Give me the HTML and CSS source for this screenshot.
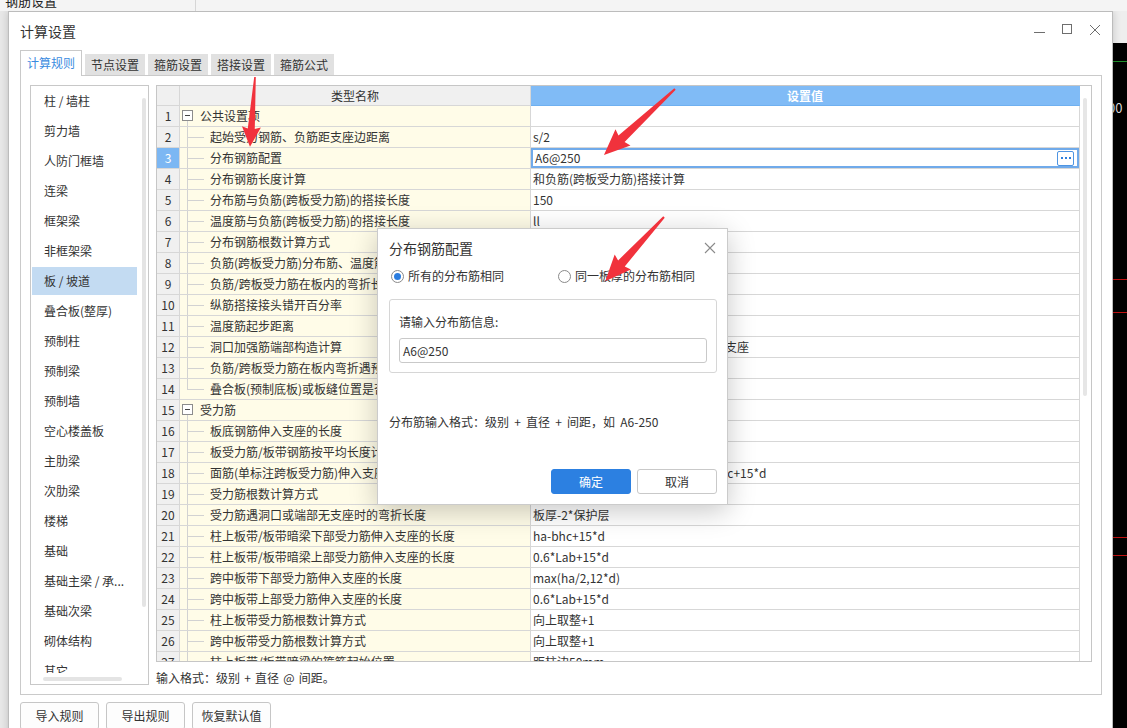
FILE: index.html
```html
<!DOCTYPE html>
<html lang="zh-CN">
<head>
<meta charset="utf-8">
<title>计算设置</title>
<link rel="stylesheet" href="styles.css">
</head>
<body>
<div class="topstrip"><span class="toptitle">钢筋设置</span></div>
<div class="desk">
  <div class="leftgutter"></div>
  <div class="window">
    <div class="titlebar">
      <span class="wtitle">计算设置</span>
      <div class="wctrls">
        <svg class="wc" viewBox="0 0 16 16"><path d="M3 9.5H14" /></svg>
        <svg class="wc" viewBox="0 0 16 16"><rect x="3.5" y="1.5" width="9" height="9" /></svg>
        <svg class="wc" viewBox="0 0 16 16"><path d="M3 2L13 12M13 2L3 12" /></svg>
      </div>
    </div>
    <div class="tabs">
      <div class="tab active">计算规则</div>
      <div class="tab">节点设置</div>
      <div class="tab">箍筋设置</div>
      <div class="tab">搭接设置</div>
      <div class="tab">箍筋公式</div>
    </div>
    <div class="panel">
      <div class="catlist">
        <div class="cat-main">
          <div class="cat-items">
            <div class="cat">柱 / 墙柱</div>
            <div class="cat">剪力墙</div>
            <div class="cat">人防门框墙</div>
            <div class="cat">连梁</div>
            <div class="cat">框架梁</div>
            <div class="cat">非框架梁</div>
            <div class="cat selected">板 / 坡道</div>
            <div class="cat">叠合板(整厚)</div>
            <div class="cat">预制柱</div>
            <div class="cat">预制梁</div>
            <div class="cat">预制墙</div>
            <div class="cat">空心楼盖板</div>
            <div class="cat">主肋梁</div>
            <div class="cat">次肋梁</div>
            <div class="cat">楼梯</div>
            <div class="cat">基础</div>
            <div class="cat">基础主梁 / 承...</div>
            <div class="cat">基础次梁</div>
            <div class="cat">砌体结构</div>
            <div class="cat">其它</div>
          </div>
          <div class="cat-vtrack"><div class="cat-vthumb"></div></div>
        </div>
        <div class="cat-htrack"><div class="cat-hthumb"></div></div>
      </div>
      <div class="rightcol">
        <div class="table">
          <div class="tgrid">
            <div class="row head"><div class="c-num"></div><div class="h-name">类型名称</div><div class="h-val">设置值</div></div>
            <div class="row"><div class="c-num">1</div><div class="c-name grp"><i class="tog"></i>公共设置项</div><div class="c-val"></div></div>
            <div class="row"><div class="c-num">2</div><div class="c-name child">起始受力钢筋、负筋距支座边距离</div><div class="c-val">s/2</div></div>
            <div class="row sel"><div class="c-num">3</div><div class="c-name child">分布钢筋配置</div><div class="c-val"><span>A6@250</span><span class="more"><b></b><b></b><b></b></span></div></div>
            <div class="row"><div class="c-num">4</div><div class="c-name child">分布钢筋长度计算</div><div class="c-val">和负筋(跨板受力筋)搭接计算</div></div>
            <div class="row"><div class="c-num">5</div><div class="c-name child">分布筋与负筋(跨板受力筋)的搭接长度</div><div class="c-val">150</div></div>
            <div class="row"><div class="c-num">6</div><div class="c-name child">温度筋与负筋(跨板受力筋)的搭接长度</div><div class="c-val">ll</div></div>
            <div class="row"><div class="c-num">7</div><div class="c-name child">分布钢筋根数计算方式</div><div class="c-val">向下取整+1</div></div>
            <div class="row"><div class="c-num">8</div><div class="c-name child">负筋(跨板受力筋)分布筋、温度筋是否带弯勾</div><div class="c-val">否</div></div>
            <div class="row"><div class="c-num">9</div><div class="c-name child">负筋/跨板受力筋在板内的弯折长度</div><div class="c-val">板厚-2*保护层</div></div>
            <div class="row"><div class="c-num">10</div><div class="c-name child">纵筋搭接接头错开百分率</div><div class="c-val">50%</div></div>
            <div class="row"><div class="c-num">11</div><div class="c-name child">温度筋起步距离</div><div class="c-val">s</div></div>
            <div class="row"><div class="c-num">12</div><div class="c-name child">洞口加强筋端部构造计算</div><div class="c-val">遇洞口时弯折至板底，无洞口时伸入支座</div></div>
            <div class="row"><div class="c-num">13</div><div class="c-name child">负筋/跨板受力筋在板内弯折遇预制板时的弯折长度</div><div class="c-val">到叠合板顶</div></div>
            <div class="row"><div class="c-num">14</div><div class="c-name child last">叠合板(预制底板)或板缝位置是否布置负筋</div><div class="c-val">是</div></div>
            <div class="row"><div class="c-num">15</div><div class="c-name grp"><i class="tog"></i>受力筋</div><div class="c-val"></div></div>
            <div class="row"><div class="c-num">16</div><div class="c-name child">板底钢筋伸入支座的长度</div><div class="c-val">max(ha/2,5*d)</div></div>
            <div class="row"><div class="c-num">17</div><div class="c-name child">板受力筋/板带钢筋按平均长度计算</div><div class="c-val">否</div></div>
            <div class="row"><div class="c-num">18</div><div class="c-name child">面筋(单标注跨板受力筋)伸入支座的长度</div><div class="c-val">能直锚就直锚，否则按公式：&nbsp;&nbsp;ha-bhc+15*d</div></div>
            <div class="row"><div class="c-num">19</div><div class="c-name child">受力筋根数计算方式</div><div class="c-val">向上取整+1</div></div>
            <div class="row"><div class="c-num">20</div><div class="c-name child">受力筋遇洞口或端部无支座时的弯折长度</div><div class="c-val">板厚-2*保护层</div></div>
            <div class="row"><div class="c-num">21</div><div class="c-name child">柱上板带/板带暗梁下部受力筋伸入支座的长度</div><div class="c-val">ha-bhc+15*d</div></div>
            <div class="row"><div class="c-num">22</div><div class="c-name child">柱上板带/板带暗梁上部受力筋伸入支座的长度</div><div class="c-val">0.6*Lab+15*d</div></div>
            <div class="row"><div class="c-num">23</div><div class="c-name child">跨中板带下部受力筋伸入支座的长度</div><div class="c-val">max(ha/2,12*d)</div></div>
            <div class="row"><div class="c-num">24</div><div class="c-name child">跨中板带上部受力筋伸入支座的长度</div><div class="c-val">0.6*Lab+15*d</div></div>
            <div class="row"><div class="c-num">25</div><div class="c-name child">柱上板带受力筋根数计算方式</div><div class="c-val">向上取整+1</div></div>
            <div class="row"><div class="c-num">26</div><div class="c-name child">跨中板带受力筋根数计算方式</div><div class="c-val">向上取整+1</div></div>
            <div class="row"><div class="c-num">27</div><div class="c-name child">柱上板带/板带暗梁的箍筋起始位置</div><div class="c-val">距柱边50mm</div></div>
          </div>
          <div class="tscroll"><div class="tthumb"></div></div>
        </div>
        <div class="note">输入格式：级别 + 直径 @ 间距。</div>
      </div>
    </div>
    <div class="bottombar">
      <div class="btn">导入规则</div>
      <div class="btn">导出规则</div>
      <div class="btn">恢复默认值</div>
    </div>
  </div>
  <div class="rightpanel">
    <div class="rp-top"></div>
    <div class="rp-black"><span class="rp-num">00</span></div>
  </div>
</div>

<div class="dialog">
  <div class="dlg-head">
    <span>分布钢筋配置</span>
    <svg class="dlg-close" viewBox="0 0 12 12"><path d="M1 1L11 11M11 1L1 11" /></svg>
  </div>
  <div class="dlg-radios">
    <span class="radio on"><i></i></span><span class="rlabel">所有的分布筋相同</span>
    <span class="radio second"></span><span class="rlabel">同一板厚的分布筋相同</span>
  </div>
  <div class="dlg-group">
    <div class="glabel">请输入分布筋信息:</div>
    <div class="ginput">A6@250</div>
  </div>
  <div class="hint">分布筋输入格式：级别 + 直径 + 间距，如 A6-250</div>
  <div class="dlg-btns">
    <div class="dbtn primary">确定</div>
    <div class="dbtn">取消</div>
  </div>
</div>

<svg class="arrows" viewBox="0 0 1127 728">
  <polygon transform="translate(255 77) rotate(94.1)" points="0,-0.8 52,-3.5 50,-9.5 70,0 50,9.5 52,3.5 0,0.8" />
  <polygon transform="translate(675 89) rotate(137.1)" points="0,-1 73,-4.5 71,-11 97,0 71,11 73,4.5 0,1" />
  <polygon transform="translate(664 217) rotate(132.5)" points="0,-1 63,-4.5 61,-11 87,0 61,11 63,4.5 0,1" />
</svg>
</body>
</html>
```
FILE: styles.css
```css
* { box-sizing: border-box; margin: 0; padding: 0; }
html, body { width: 1127px; height: 728px; overflow: hidden; }
body {
  background: #f0f0f0;
  font-family: "Noto Sans CJK SC", "Microsoft YaHei", "Noto Sans", sans-serif;
  font-size: 12px;
  color: #333;
  position: relative;
  display: flex;
  flex-direction: column;
}

/* background app strip */
.topstrip { height: 11px; flex: none; background: #f4f4f4; overflow: hidden; display: flex; }
.toptitle {
  display: block; width: 191px; margin: -9px 0 0 5px;
  font-size: 13px; line-height: 20px; color: #222;
  border-right: 1px solid #d6d6d6;
}
.desk { flex: 1; display: flex; overflow: hidden; }
.leftgutter { width: 8px; flex: none; background: #e8e8e8; }
.rightpanel { flex: 1; display: flex; flex-direction: column; overflow: hidden; }
.rp-top { height: 32px; background: #eeeeee; flex: none; }
.rp-black {
  flex: 1;
  background:
    linear-gradient(#1f8f2a, #1f8f2a) 0 18px / 100% 1px no-repeat,
    linear-gradient(#c01010, #c01010) 0 236px / 100% 1px no-repeat,
    linear-gradient(#c01010, #c01010) 0 269px / 100% 1px no-repeat,
    linear-gradient(#c01010, #c01010) 0 494px / 100% 1px no-repeat,
    linear-gradient(#c01010, #c01010) 0 512px / 100% 1px no-repeat,
    #000;
}
.rp-num { display: block; margin: 56px 0 0 -5px; color: #d8d8d8; font-size: 13px; line-height: 18px; white-space: nowrap; }

/* main window */
.window {
  width: 1105px; height: 740px; flex: none;
  background: #fff;
  border: 1px solid #bcbcbc;
  box-shadow: 0 0 8px rgba(0,0,0,0.18);
  display: flex; flex-direction: column;
  position: relative; z-index: 1;
}
.titlebar { height: 38px; flex: none; display: flex; align-items: center; padding: 0 9px 0 11px; }
.wtitle { font-size: 14px; color: #333; }
.wctrls { margin-left: auto; display: flex; gap: 12px; }
.wc { width: 16px; height: 16px; fill: none; stroke: #6e6e6e; stroke-width: 1; }

.tabs { height: 25px; flex: none; display: flex; align-items: flex-end; gap: 3px; padding-left: 11px; }
.tab {
  width: 60px; height: 21px; line-height: 21px; text-align: center;
  background: #e1e1e1; color: #333;
}
.tab.active {
  width: 62px; height: 26px; line-height: 24px; margin-bottom: -1px;
  background: #fff; color: #3a8be0;
  border: 1px solid #c9c9c9; border-bottom: 0;
  position: relative; z-index: 1;
}

.panel {
  height: 620px; flex: none; margin: 0 10px 0 11px;
  border: 1px solid #cacaca; padding: 9px;
  display: flex; gap: 7px;
}

/* category list */
.catlist { width: 119px; height: 600px; flex: none; border: 1px solid #c8c8c8; display: flex; flex-direction: column; }
.cat-main { flex: 1; display: flex; overflow: hidden; }
.cat-items { width: 107px; flex: none; display: flex; flex-direction: column; }
.cat { width: 105px; height: 28px; flex: none; margin: 1px 0 1px 1px; line-height: 28px; padding-left: 12px; white-space: nowrap; color: #333; }
.cat.selected { background: #c3dbf2; }
.cat-vtrack { flex: 1; padding: 12px 0 0 4px; }
.cat-vthumb { width: 4px; height: 509px; background: #e4e4e4; border-radius: 2px; }
.cat-htrack { height: 11px; flex: none; padding: 4px 0 0 12px; }
.cat-hthumb { width: 79px; height: 4px; background: #e4e4e4; border-radius: 2px; }

/* table */
.rightcol { width: 936px; flex: none; display: flex; flex-direction: column; }
.table { height: 577px; flex: none; border: 1px solid #c6c6c6; display: flex; overflow: hidden; }
.tgrid { width: 923px; flex: none; overflow: hidden; }
.tscroll { flex: 1; padding: 12px 0 0 3px; }
.tthumb { width: 4px; height: 298px; background: #e6e6e6; border-radius: 2px; }

.row { display: grid; grid-template-columns: 23px 351px 549px; height: 21px; }
.row > div {
  border-right: 1px solid #d7d7d7; border-bottom: 1px solid #d7d7d7;
  line-height: 20px; white-space: nowrap; overflow: hidden;
}
.row.head { height: 20px; }
.row.head > div { line-height: 19px; }
.c-num { background: #f0f0f0; text-align: center; color: #333; }
.h-name { background: #f0f0f0; text-align: center; color: #333; }
.h-val { background: #80bbf6; color: #fff; font-weight: bold; text-align: center; border-right-color: #80bbf6 !important; border-bottom-color: #6fb0f0 !important; }
.c-name { background: #fffce8; position: relative; color: #333; }
.c-name.child { padding-left: 30px; }
.c-name.child::before { content: ""; position: absolute; left: 7px; top: 0; bottom: -1px; width: 1px; background: #d2d2d2; }
.c-name.child.last::before { bottom: 50%; }
.c-name.child::after { content: ""; position: absolute; left: 7px; top: 10px; width: 17px; height: 1px; background: #d2d2d2; }
.c-name.grp { padding-left: 20px; }
.c-name.grp::after { content: ""; position: absolute; left: 7px; top: 15px; bottom: -1px; width: 1px; background: #d2d2d2; }
.tog {
  position: absolute; left: 2px; top: 4px; width: 11px; height: 11px; z-index: 1;
  border: 1px solid #8c8c8c; background: #fff;
}
.tog::after { content: ""; position: absolute; left: 2px; top: 4px; width: 5px; height: 1px; background: #444; }
.c-val { padding-left: 2px; color: #333; }
.row.sel .c-num { background: #7cb7f3; color: #fff; }
.row.sel .c-val {
  display: flex; align-items: center; justify-content: space-between;
  padding: 0 5px 0 4px;
  box-shadow: inset 0 0 0 2px #70aaea;
}
.more {
  width: 17px; height: 15px; border: 1px solid #4f95e2; border-radius: 2px; background: #fff;
  display: flex; align-items: center; justify-content: center; gap: 2px;
}
.more b { width: 2px; height: 2px; background: #2f7fdc; display: block; }
.note { margin-top: 6px; line-height: 20px; color: #333; white-space: nowrap; word-spacing: 1.5px; }

/* bottom */
.bottombar { margin-top: 7px; padding-left: 11px; display: flex; gap: 7px; flex: none; }
.btn {
  width: 79px; height: 28px; line-height: 26px; text-align: center;
  border: 1px solid #c6c6c6; border-radius: 3px; background: #fdfdfd; color: #333;
}

/* dialog */
.dialog {
  position: absolute; left: 377px; top: 228px; width: 351px; height: 277px; z-index: 5;
  background: #fff; border: 1px solid #cbcbcb;
  box-shadow: 0 6px 26px rgba(0,0,0,0.22);
  padding: 0 10px 0 11px;
  display: flex; flex-direction: column;
}
.dlg-head { height: 38px; flex: none; display: flex; align-items: center; font-size: 14px; color: #333; }
.dlg-close { width: 12px; height: 12px; margin-left: auto; margin-right: 1px; fill: none; stroke: #8a8a8a; stroke-width: 1.1; }
.dlg-radios { height: 18px; flex: none; display: flex; align-items: center; }
.radio {
  width: 13px; height: 13px; border: 1px solid #8a8a8a; border-radius: 50%; background: #fff;
  display: flex; align-items: center; justify-content: center; margin-left: 2px; flex: none;
}
.radio.second { margin-left: 54px; }
.radio i { width: 7px; height: 7px; border-radius: 50%; background: #2b7de0; display: block; }
.rlabel { margin-left: 4px; line-height: 18px; white-space: nowrap; }
.dlg-group {
  margin-top: 14px; height: 74px; flex: none;
  border: 1px solid #d6d6d6; border-radius: 3px;
  padding: 12px 9px 0 9px;
}
.glabel { line-height: 20px; }
.ginput {
  margin-top: 6px; width: 308px; height: 25px; line-height: 23px;
  border: 1px solid #c9c9c9; border-radius: 3px; padding-left: 3px; color: #333;
}
.hint { margin-top: 39px; line-height: 20px; white-space: nowrap; word-spacing: 2.5px; }
.dlg-btns { margin-top: 37px; display: flex; justify-content: flex-end; gap: 6px; }
.dbtn {
  width: 80px; height: 25px; line-height: 23px; text-align: center;
  border: 1px solid #c9c9c9; border-radius: 3px; background: #fff; color: #333;
}
.dbtn.primary { background: #2c80e1; border-color: #2c80e1; color: #fff; }

/* annotation arrows */
.arrows { position: absolute; left: 0; top: 0; width: 1127px; height: 728px; z-index: 10; pointer-events: none; fill: #f1323c; }
```
